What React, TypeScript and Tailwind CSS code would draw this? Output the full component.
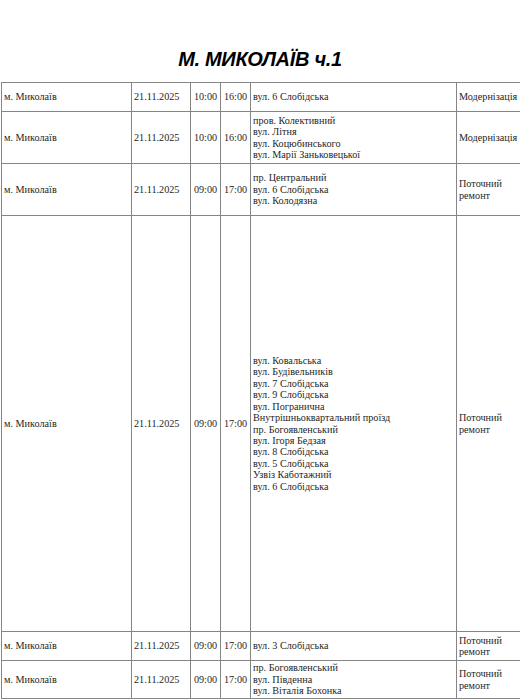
import React from 'react'

type Row = {
  city: string
  date: string
  from: string
  to: string
  streets: string[]
  kind: string[]
  h: string
}

const rows: Row[] = [
  { city: 'м. Миколаїв', date: '21.11.2025', from: '10:00', to: '16:00', streets: ['вул. 6 Слобідська'], kind: ['Модернізація'], h: 'h-[29px]' },
  {
    city: 'м. Миколаїв', date: '21.11.2025', from: '10:00', to: '16:00',
    streets: ['пров. Колективний', 'вул. Літня', 'вул. Коцюбинського', 'вул. Марії Заньковецької'],
    kind: ['Модернізація'], h: 'h-[52px]',
  },
  {
    city: 'м. Миколаїв', date: '21.11.2025', from: '09:00', to: '17:00',
    streets: ['пр. Центральний', 'вул. 6 Слобідська', 'вул. Колодязна'],
    kind: ['Поточний', 'ремонт'], h: 'h-[52px]',
  },
  {
    city: 'м. Миколаїв', date: '21.11.2025', from: '09:00', to: '17:00',
    streets: [
      'вул. Ковальська', 'вул. Будівельників', 'вул. 7 Слобідська', 'вул. 9 Слобідська',
      'вул. Погранична', 'Внутрішньоквартальний проїзд', 'пр. Богоявленський', 'вул. Ігоря Бедзая',
      'вул. 8 Слобідська', 'вул. 5 Слобідська', 'Узвіз Каботажний', 'вул. 6 Слобідська',
    ],
    kind: ['Поточний', 'ремонт'], h: 'h-[416px]',
  },
  { city: 'м. Миколаїв', date: '21.11.2025', from: '09:00', to: '17:00', streets: ['вул. 3 Слобідська'], kind: ['Поточний', 'ремонт'], h: 'h-[29px]' },
  {
    city: 'м. Миколаїв', date: '21.11.2025', from: '09:00', to: '17:00',
    streets: ['пр. Богоявленський', 'вул. Південна', 'вул. Віталія Бохонка'],
    kind: ['Поточний', 'ремонт'], h: 'h-[38px]',
  },
]

const cell = 'border border-[#858585] px-[2px] align-middle'

export default function App() {
  return (
    <div className="w-[520px] h-[700px] overflow-hidden bg-white text-[#262626]">
      {/* Title */}
      <div className="h-[82px] pt-[46px] text-center">
        <h1 className="font-['Liberation_Sans',sans-serif] text-[20px] font-bold italic leading-[26px] tracking-[-0.3px] text-black">
          М. МИКОЛАЇВ ч.1
        </h1>
      </div>

      {/* Schedule table */}
      <table className="ml-[1px] w-[524px] table-fixed border-collapse font-['Liberation_Serif',serif] text-[10.2px] leading-[11.4px]">
        <colgroup>
          <col className="w-[130px]" />
          <col className="w-[59px]" />
          <col className="w-[30px]" />
          <col className="w-[30px]" />
          <col className="w-[206px]" />
          <col className="w-[69px]" />
        </colgroup>
        <tbody>
          {rows.map((r, i) => (
            <tr key={i} className={r.h}>
              <td className={cell}>{r.city}</td>
              <td className={cell}>{r.date}</td>
              <td className={`${cell} text-center`}>{r.from}</td>
              <td className={`${cell} text-center`}>{r.to}</td>
              <td className={cell}>
                {r.streets.map((s) => (
                  <div key={s} className="whitespace-nowrap">{s}</div>
                ))}
              </td>
              <td className={cell}>
                {r.kind.map((k) => (
                  <div key={k} className="whitespace-nowrap">{k}</div>
                ))}
              </td>
            </tr>
          ))}
        </tbody>
      </table>
    </div>
  )
}
